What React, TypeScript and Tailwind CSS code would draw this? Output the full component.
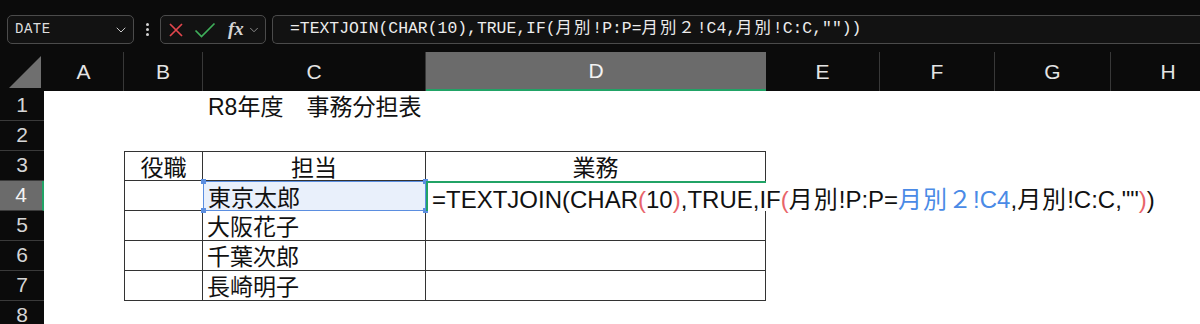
import { ChevronDown } from "lucide-react"

const cols = ["A", "B", "C", "D", "E", "F", "G", "H"]
const names = ["東京太郎", "大阪花子", "千葉次郎", "長崎明子"]

const cellFont = "font-['Liberation_Sans','Noto_Sans_CJK_JP',sans-serif]"

// CJK runs in the formula bar sit a little looser than the mono glyphs
const J = ({ children }: { children: React.ReactNode }) => <span className="tracking-[2px]">{children}</span>

function FormulaBar() {
  return (
    <div className="h-[52px] flex items-start pt-[15px] pl-[7px]">
      {/* Name box */}
      <div className="w-[127px] h-[29px] rounded-[5px] border border-[#4b4b4b] bg-[#121212] flex items-center justify-between pl-[7px] pr-[4px]">
        <span className="font-['Liberation_Mono',monospace] text-[14px] text-[#dedede] tracking-[0.5px]">DATE</span>
        <ChevronDown className="w-[16px] h-[16px] text-[#c8c8c8]" strokeWidth={1.5} />
      </div>
      {/* vertical dots */}
      <div className="w-[26px] h-[29px] flex flex-col items-center justify-center gap-[2px]">
        <span className="w-[3px] h-[3px] rounded-full bg-[#d0d0d0]" />
        <span className="w-[3px] h-[3px] rounded-full bg-[#d0d0d0]" />
        <span className="w-[3px] h-[3px] rounded-full bg-[#d0d0d0]" />
      </div>
      {/* cancel / enter / fx */}
      <div className="w-[106px] h-[29px] rounded-[5px] border border-[#4b4b4b] bg-[#121212] flex items-center pl-[7px]">
        <svg width="16" height="16" viewBox="0 0 16 16" className="mr-[10px]">
          <path d="M2 2 L14 14 M14 2 L2 14" stroke="#e2464d" strokeWidth="1.7" fill="none" />
        </svg>
        <svg width="22" height="16" viewBox="0 0 22 16" className="mr-[12px]">
          <path d="M1.5 8.5 L7.5 14.5 L20.5 1.5" stroke="#3fae5a" strokeWidth="1.7" fill="none" />
        </svg>
        <span className="font-['Liberation_Serif',serif] italic font-bold text-[19px] text-[#d4d4d4] leading-none -mt-[3px]">fx</span>
        <ChevronDown className="w-[14px] h-[14px] text-[#9a9a9a] ml-[3px]" strokeWidth={1.5} />
      </div>
      {/* formula text */}
      <div className="ml-[6px] flex-1 h-[29px] rounded-l-[5px] border border-r-0 border-[#4b4b4b] bg-[#121212] flex items-center pl-[17px]">
        <span className="font-['Liberation_Mono','Noto_Sans_CJK_JP',monospace] text-[16.4px] text-[#ececec] whitespace-nowrap">
          =TEXTJOIN(CHAR(10),TRUE,IF(<J>月別</J>!P:P=<J>月別２</J>!C4,<J>月別</J>!C:C,""))
        </span>
      </div>
    </div>
  )
}

function ColumnHeaders() {
  return (
    <>
      <div className="h-[39px] bg-[#0b0b0b] flex items-end pl-[8px] pb-[2px]">
        <svg width="34" height="34" viewBox="0 0 34 34">
          <path d="M33 1 L33 33 L1 33 Z" fill="#6f6f6f" />
        </svg>
      </div>
      {cols.map((c) =>
        c === "D" ? (
          <div
            key={c}
            className="h-[39px] bg-[#6b6b6b] border-b-2 border-[#21a366] flex items-center justify-center text-[21px] text-[#f2f2f2]"
          >
            {c}
          </div>
        ) : (
          <div
            key={c}
            className="h-[39px] bg-[#0b0b0b] border-r border-[#383838] flex items-center justify-center text-[21px] text-[#e4e4e4]"
          >
            {c}
          </div>
        )
      )}
    </>
  )
}

function RowHeader({ n }: { n: number }) {
  const active = n === 4
  return (
    <div
      className={`h-[30px] border-b border-[#3a3a3a] flex justify-center pt-[2px] text-[21px] leading-[24px] ${
        active ? "bg-[#6b6b6b] text-[#f4f4f4] border-r-2 border-r-[#21a366]" : "bg-[#0b0b0b] text-[#d6d6d6]"
      }`}
    >
      {n}
    </div>
  )
}

function Cell({ className = "", children }: { className?: string; children?: React.ReactNode }) {
  return (
    <div className={`h-[30px] pt-[5px] text-[23px] leading-[23px] text-[#111] whitespace-nowrap ${className}`}>
      {children}
    </div>
  )
}

const Red = ({ children }: { children: React.ReactNode }) => <span className="text-[#e8646a]">{children}</span>
const K = ({ children }: { children: React.ReactNode }) => <span className="tracking-[1px]">{children}</span>

function Row({ n }: { n: number }) {
  const empty = (k: string) => <Cell key={k} />
  const tail = ["E", "F", "G", "H"].map((k) => empty(k))

  if (n === 1)
    return (
      <>
        <RowHeader n={n} />
        <Cell />
        <Cell />
        <Cell className="pl-[5px] overflow-visible">R8年度　事務分担表</Cell>
        <Cell />
        {tail}
      </>
    )

  if (n === 3)
    return (
      <>
        <RowHeader n={n} />
        <Cell />
        <Cell className="border border-[#333] text-center">役職</Cell>
        <Cell className="border-t border-r border-b border-[#333] text-center">担当</Cell>
        <Cell className="border-t border-r border-[#333] text-center">業務</Cell>
        {tail}
      </>
    )

  if (n === 4)
    return (
      <>
        <RowHeader n={n} />
        <Cell />
        <Cell className="border-l border-b border-[#333]" />
        <Cell className="relative border border-[#5b8ee0] bg-[#e9f0fb] pl-[4px]">
          {names[0]}
          <span className="absolute -left-[3px] -top-[3px] w-[5px] h-[5px] bg-[#5b8ee0]" />
          <span className="absolute -right-[3px] -top-[3px] w-[5px] h-[5px] bg-[#5b8ee0]" />
          <span className="absolute -left-[3px] -bottom-[3px] w-[5px] h-[5px] bg-[#5b8ee0]" />
          <span className="absolute -right-[3px] -bottom-[3px] w-[5px] h-[5px] bg-[#5b8ee0]" />
        </Cell>
        <Cell className="relative z-10 border-t-2 border-l-2 border-[#21a366] pl-[4px] pt-[4px] text-[24px] leading-[23px] overflow-visible flex items-start">
          <span>
            =TEXTJOIN(CHAR<Red>(</Red>10<Red>)</Red>,TRUE,IF<Red>(</Red>
            <K>月別</K>!P:P=
            <span className="text-[#4a8ae6]">
              <K>月別２</K>!C4
            </span>
            ,<K>月別</K>!C:C,""<Red>)</Red>)
          </span>
          <span className="inline-block w-[3px] h-[23px] bg-[#111] ml-[1px]" />
        </Cell>
        {tail}
      </>
    )

  if (n >= 5 && n <= 7)
    return (
      <>
        <RowHeader n={n} />
        <Cell />
        <Cell className="border-l border-r border-b border-[#333]" />
        <Cell className="border-r border-b border-[#333] pl-[4px]">{names[n - 4]}</Cell>
        <Cell className="border-r border-b border-[#333]" />
        {tail}
      </>
    )

  return (
    <>
      <RowHeader n={n} />
      <Cell />
      <Cell />
      <Cell />
      <Cell />
      {tail}
    </>
  )
}

export default function App() {
  return (
    <div className="w-[1200px] h-[324px] overflow-hidden bg-[#0b0b0b] font-['Liberation_Sans',sans-serif]">
      <FormulaBar />
      <div className={`grid grid-cols-[44px_80px_79px_223px_340px_114px_115px_116px_115px] bg-white ${cellFont}`}>
        <ColumnHeaders />
        {[1, 2, 3, 4, 5, 6, 7, 8].map((n) => (
          <Row key={n} n={n} />
        ))}
      </div>
    </div>
  )
}
